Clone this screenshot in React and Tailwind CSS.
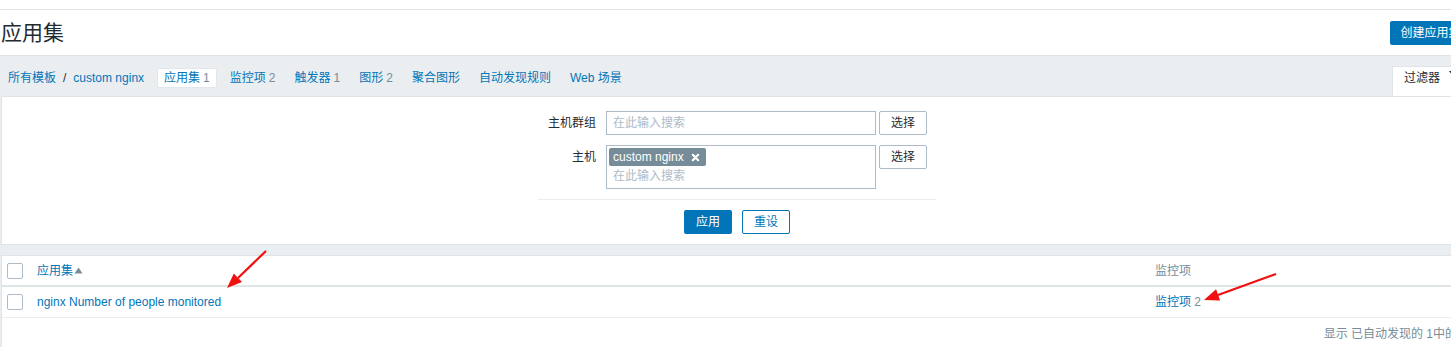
import React from 'react'

const font = { fontFamily: '"Liberation Sans", "Noto Sans CJK SC", sans-serif' }

const tabs = [
  { label: '应用集', count: '1', active: true },
  { label: '监控项', count: '2' },
  { label: '触发器', count: '1' },
  { label: '图形', count: '2' },
  { label: '聚合图形' },
  { label: '自动发现规则' },
  { label: 'Web 场景' }
]

const Arrows = () => (
  <svg className="absolute left-0 top-0 pointer-events-none" width="1451" height="347">
    <line x1="266" y1="251" x2="238" y2="278" stroke="#f01010" strokeWidth="2.2" />
    <polygon points="227,288 242,282.1 233.8,273.4" fill="#f01010" />
    <line x1="1276" y1="274" x2="1218" y2="295" stroke="#f01010" strokeWidth="2.2" />
    <polygon points="1204,300 1220.1,300.6 1216.1,289.3" fill="#f01010" />
  </svg>
)

const SelectButton = () => (
  <button className="h-[24px] w-[48px] border border-[#acbbc7] rounded-[2px] bg-white text-[12px] text-[#1f2c33]">
    选择
  </button>
)

export default function App() {
  return (
    <div className="relative w-[1451px] h-[347px] overflow-hidden bg-white text-[12px] text-[#1f2c33]" style={font}>
      <div className="w-[1471px]">
        {/* top strip */}
        <div className="h-[10px] border-b border-[#dfe4e7]" />

        {/* header */}
        <div className="h-[45px] flex items-center justify-between">
          <h1 className="text-[21px] leading-none text-[#1f2c33] pl-[1px]">应用集</h1>
          <button className="h-[24px] w-[81px] rounded-[2px] bg-[#0275b8] text-white text-[12px]">
            创建应用集
          </button>
        </div>

        <div className="bg-[#ebeef0] border-t border-[#dfe4e7] pl-[1px]">
          {/* nav tabs */}
          <div className="h-[40px] flex justify-between">
            <div className="flex items-center pl-[7px] pt-[4px]">
              <a className="text-[#0275b8]">所有模板</a>
              <span className="mx-[7px] text-[#1f2c33]">/</span>
              <a className="text-[#0275b8]">custom nginx</a>
              <div className="flex items-center gap-[7px] ml-[13px]">
                {tabs.map((t) => (
                  <span
                    key={t.label}
                    className={
                      t.active
                        ? 'h-[20px] flex items-center px-[6px] bg-white border border-[#e3e7ea] rounded-[2px] text-[#0275b8]'
                        : 'h-[20px] flex items-center px-[6px] text-[#0275b8]'
                    }
                  >
                    {t.label}
                    {t.count && <span className="text-[#768d99] ml-[3px]">{t.count}</span>}
                  </span>
                ))}
              </div>
            </div>
            <div className="self-end h-[30px] w-[79px] bg-white border-t border-l border-[#dfe4e7] flex items-center pb-[7px] pl-[11px] gap-[8px]">
              <span>过滤器</span>
              <svg width="10" height="10" viewBox="0 0 10 10" className="-mt-[6px]">
                <path d="M1 1 L9 1 L5 6 Z" fill="#1f2c33" />
              </svg>
            </div>
          </div>

          {/* filter panel */}
          <div className="bg-white border border-[#dfe4e7] pt-[14px] pb-[10px]">
            <div className="w-[400px] mx-auto pl-[2px]">
              <div className="flex items-start">
                <label className="w-[58px] h-[24px] flex items-center justify-end">主机群组</label>
                <div className="ml-[10px] w-[270px] h-[24px] border border-[#acbbc7] flex items-center px-[6px] text-[#acbbc7]">
                  在此输入搜索
                </div>
                <div className="ml-[3px]">
                  <SelectButton />
                </div>
              </div>
              <div className="flex items-start mt-[10px]">
                <label className="w-[58px] h-[24px] flex items-center justify-end">主机</label>
                <div className="ml-[10px] w-[270px] h-[44px] border border-[#acbbc7] px-[2px] pt-[2px]">
                  <span className="inline-flex items-center h-[18px] px-[4px] bg-[#768d99] text-white rounded-[2px]">
                    custom nginx
                    <svg width="9" height="9" viewBox="0 0 10 10" className="ml-[7px]">
                      <path d="M2 2 L8 8 M8 2 L2 8" stroke="white" strokeWidth="2.4" strokeLinecap="round" />
                    </svg>
                    <span className="w-[2px]" />
                  </span>
                  <div className="pl-[4px] mt-[2px] leading-[16px] text-[#acbbc7]">在此输入搜索</div>
                </div>
                <div className="ml-[3px]">
                  <SelectButton />
                </div>
              </div>
              <div className="mt-[10px] border-t border-[#ebeef0] pt-[10px] flex justify-center gap-[10px]">
                <button className="h-[24px] w-[48px] rounded-[2px] bg-[#0275b8] text-white text-[12px]">应用</button>
                <button className="h-[24px] w-[48px] rounded-[2px] border border-[#0275b8] text-[#0275b8] bg-white text-[12px]">
                  重设
                </button>
              </div>
            </div>
          </div>

          <div className="h-[10px]" />

          {/* table */}
          <div className="bg-white border-l border-t border-[#dfe4e7] h-[100px]">
            <div className="h-[31px] flex items-center border-b-2 border-[#dfe4e7]">
              <span className="ml-[5px] w-[16px] h-[16px] border border-[#acbbc7] rounded-[2px]" />
              <span className="ml-[14px] text-[#0275b8] flex items-center">
                应用集
                <svg width="9" height="7" viewBox="0 0 9 7" className="ml-[1px]">
                  <path d="M0.5 6.5 L4.5 0.5 L8.5 6.5 Z" fill="#768d99" />
                </svg>
              </span>
              <span className="ml-auto w-[316px] text-[#768d99]">监控项</span>
            </div>
            <div className="h-[31px] flex items-center border-b border-[#ebeef0]">
              <span className="ml-[5px] w-[16px] h-[16px] border border-[#acbbc7] rounded-[2px]" />
              <span className="ml-[14px] text-[#0275b8]">nginx Number of people monitored</span>
              <span className="ml-auto w-[316px]">
                <span className="text-[#0275b8]">监控项</span>
                <span className="text-[#768d99]"> 2</span>
              </span>
            </div>
            <div className="h-[31px] flex items-center justify-end pr-[4px] text-[#768d99]">
              显示 已自动发现的 1中的 1
            </div>
          </div>
        </div>
      </div>
      <Arrows />
    </div>
  )
}
